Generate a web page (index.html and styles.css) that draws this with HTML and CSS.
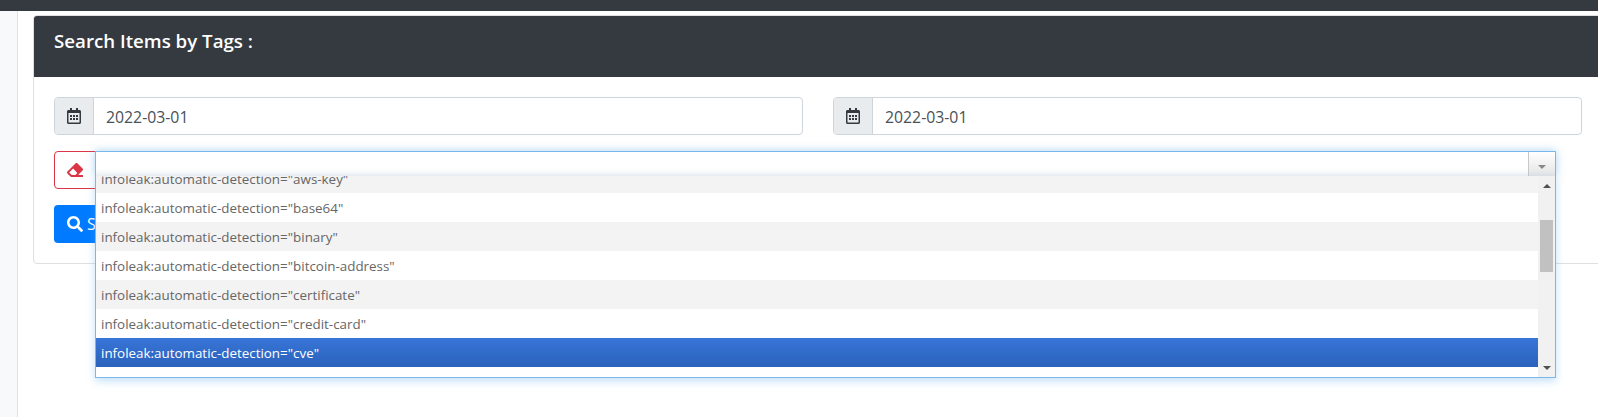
FILE: index.html
```html
<!DOCTYPE html>
<html lang="en">
<head>
    <meta charset="UTF-8">
    <meta name="viewport" content="width=device-width, initial-scale=1.0">
    <title>Search Items by Tags</title>
    <link rel="stylesheet" href="styles.css">
</head>
<body>

    <!-- Top Bar -->
    <div class="topbar"></div>

    <div class="page">
        <div class="sidebar"></div>

        <div class="main">
            <div class="card">
                <div class="card-header">
                    <h5>Search Items by Tags :</h5>
                </div>

                <div class="card-body">

                    <!-- Dates -->
                    <div class="date-row">
                        <div class="input-group">
                            <span class="input-icon">
                                <svg class="icon-calendar" viewBox="0 0 448 512"><path d="M148 288h-40c-6.6 0-12-5.4-12-12v-40c0-6.6 5.4-12 12-12h40c6.6 0 12 5.4 12 12v40c0 6.6-5.4 12-12 12zm108-12v-40c0-6.6-5.4-12-12-12h-40c-6.6 0-12 5.4-12 12v40c0 6.6 5.4 12 12 12h40c6.6 0 12-5.4 12-12zm96 0v-40c0-6.6-5.4-12-12-12h-40c-6.6 0-12 5.4-12 12v40c0 6.6 5.4 12 12 12h40c6.6 0 12-5.4 12-12zm-96 96v-40c0-6.6-5.4-12-12-12h-40c-6.6 0-12 5.4-12 12v40c0 6.6 5.4 12 12 12h40c6.6 0 12-5.4 12-12zm-96 0v-40c0-6.6-5.4-12-12-12h-40c-6.6 0-12 5.4-12 12v40c0 6.6 5.4 12 12 12h40c6.6 0 12-5.4 12-12zm192 0v-40c0-6.6-5.4-12-12-12h-40c-6.6 0-12 5.4-12 12v40c0 6.6 5.4 12 12 12h40c6.6 0 12-5.4 12-12zm96-260v352c0 26.5-21.5 48-48 48H48c-26.5 0-48-21.5-48-48V112c0-26.5 21.5-48 48-48h48V12c0-6.6 5.4-12 12-12h40c6.6 0 12 5.4 12 12v52h128V12c0-6.6 5.4-12 12-12h40c6.6 0 12 5.4 12 12v52h48c26.5 0 48 21.5 48 48zm-48 346V160H48v298c0 3.3 2.7 6 6 6h340c3.3 0 6-2.7 6-6z"/></svg>
                            </span>
                            <span class="input-value">2022-03-01</span>
                        </div>
                        <div class="input-group">
                            <span class="input-icon">
                                <svg class="icon-calendar" viewBox="0 0 448 512"><path d="M148 288h-40c-6.6 0-12-5.4-12-12v-40c0-6.6 5.4-12 12-12h40c6.6 0 12 5.4 12 12v40c0 6.6-5.4 12-12 12zm108-12v-40c0-6.6-5.4-12-12-12h-40c-6.6 0-12 5.4-12 12v40c0 6.6 5.4 12 12 12h40c6.6 0 12-5.4 12-12zm96 0v-40c0-6.6-5.4-12-12-12h-40c-6.6 0-12 5.4-12 12v40c0 6.6 5.4 12 12 12h40c6.6 0 12-5.4 12-12zm-96 96v-40c0-6.6-5.4-12-12-12h-40c-6.6 0-12 5.4-12 12v40c0 6.6 5.4 12 12 12h40c6.6 0 12-5.4 12-12zm-96 0v-40c0-6.6-5.4-12-12-12h-40c-6.6 0-12 5.4-12 12v40c0 6.6 5.4 12 12 12h40c6.6 0 12-5.4 12-12zm192 0v-40c0-6.6-5.4-12-12-12h-40c-6.6 0-12 5.4-12 12v40c0 6.6 5.4 12 12 12h40c6.6 0 12-5.4 12-12zm96-260v352c0 26.5-21.5 48-48 48H48c-26.5 0-48-21.5-48-48V112c0-26.5 21.5-48 48-48h48V12c0-6.6 5.4-12 12-12h40c6.6 0 12 5.4 12 12v52h128V12c0-6.6 5.4-12 12-12h40c6.6 0 12 5.4 12 12v52h48c26.5 0 48 21.5 48 48zm-48 346V160H48v298c0 3.3 2.7 6 6 6h340c3.3 0 6-2.7 6-6z"/></svg>
                            </span>
                            <span class="input-value">2022-03-01</span>
                        </div>
                    </div>

                    <!-- Tag select -->
                    <div class="tag-row">
                        <button class="btn-erase">
                            <svg class="icon-eraser" viewBox="0 0 512 512"><path d="M497.941 273.941c18.745-18.745 18.745-49.137 0-67.882l-160-160c-18.745-18.745-49.136-18.746-67.883 0l-256 256c-18.745 18.745-18.745 49.137 0 67.882l96 96A48.004 48.004 0 0 0 144 480h356c6.627 0 12-5.373 12-12v-40c0-6.627-5.373-12-12-12H355.883l142.058-142.059zm-302.627-62.627l137.373 137.373L265.373 416H150.628l-80-80 124.686-124.686z"/></svg>
                        </button>

                        <div class="tag-select">
                            <div class="select-arrow"><span class="caret"></span></div>

                            <div class="select-drop">
                                <ul class="select-list">
                                    <li class="odd">infoleak:automatic-detection="aws-key"</li>
                                    <li>infoleak:automatic-detection="base64"</li>
                                    <li class="odd">infoleak:automatic-detection="binary"</li>
                                    <li>infoleak:automatic-detection="bitcoin-address"</li>
                                    <li class="odd">infoleak:automatic-detection="certificate"</li>
                                    <li>infoleak:automatic-detection="credit-card"</li>
                                    <li class="active">infoleak:automatic-detection="cve"</li>
                                </ul>
                                <div class="scrollbar">
                                    <span class="scroll-up"></span>
                                    <span class="scroll-thumb"></span>
                                    <span class="scroll-down"></span>
                                </div>
                            </div>
                        </div>
                    </div>

                    <button class="btn-search">
                        <svg class="icon-search" viewBox="0 0 512 512"><path d="M505 442.7L405.3 343c-4.5-4.5-10.6-7-17-7H372c27.6-35.3 44-79.7 44-128C416 93.1 322.9 0 208 0S0 93.1 0 208s93.1 208 208 208c48.3 0 92.7-16.4 128-44v16.3c0 6.4 2.5 12.5 7 17l99.7 99.7c9.4 9.4 24.6 9.4 33.9 0l28.3-28.3c9.4-9.4 9.4-24.6.1-34zM208 336c-70.7 0-128-57.2-128-128 0-70.7 57.2-128 128-128 70.7 0 128 57.2 128 128 0 70.7-57.2 128-128 128z"/></svg>
                        Search Tags
                    </button>

                </div>
            </div>
        </div>
    </div>

</body>
</html>
```

FILE: styles.css
```css
* {
    margin: 0;
    padding: 0;
    box-sizing: border-box;
}

html, body {
    height: 100%;
    overflow: hidden;
}

body {
    font-family: 'Open Sans', 'Noto Sans', sans-serif;
    background-color: #ffffff;
    color: #495057;
}

.topbar {
    height: 11px;
    background-color: #343a40;
}

.page {
    display: flex;
    height: 406px;
}

.sidebar {
    flex: 0 0 18px;
    background-color: #f8f9fa;
    border-right: 1px solid #dee2e6;
}

.main {
    flex: 1;
    min-width: 0;
    overflow: hidden;
    padding: 4px 0 0 15px;
}

/* Card runs off the right edge of the window */
.card {
    width: 1620px;
    border: 1px solid #dfdfdf;
    border-radius: 4px;
}

.card-header {
    height: 61px;
    padding: 12px 20px 0;
    background-color: #343a40;
    border-radius: 3px 3px 0 0;
}

.card-header h5 {
    font-size: 18.7px;
    line-height: 26px;
    font-weight: 600;
    color: #ffffff;
}

.card-body {
    padding: 20px;
}

/* Date inputs */
.date-row {
    display: grid;
    grid-template-columns: 749px 749px;
    column-gap: 30px;
    margin-bottom: 16px;
}

.input-group {
    display: flex;
    height: 38px;
    border: 1px solid #ced4da;
    border-radius: 4px;
    overflow: hidden;
}

.input-icon {
    flex: 0 0 39px;
    display: flex;
    align-items: center;
    justify-content: center;
    background-color: #e9ecef;
    border-right: 1px solid #ced4da;
}

.icon-calendar {
    width: 14px;
    height: 16px;
    fill: #343a40;
}

.input-value {
    padding: 1px 0 0 12px;
    font-size: 15.8px;
    line-height: 36px;
}

/* Tag select */
.tag-row {
    display: flex;
    height: 38px;
    margin-bottom: 16px;
}

.btn-erase {
    flex: 0 0 42px;
    display: flex;
    align-items: center;
    justify-content: center;
    background-color: #ffffff;
    border: 1px solid #dc3545;
    border-radius: 4px 0 0 4px;
}

.icon-eraser {
    width: 16px;
    height: 16px;
    fill: #dc3545;
}

.tag-select {
    position: relative;
    z-index: 2;
    width: 1461px;
    height: 25px;
    margin-left: -1px;
    background: linear-gradient(#ffffff 70%, #f3f3f3);
    border: 1px solid #7ab8ec;
    border-bottom: 0;
    box-shadow: 0 0 8px rgba(82, 168, 236, 0.5);
}

.select-arrow {
    position: absolute;
    top: 0;
    right: 0;
    width: 27px;
    height: 24px;
    display: flex;
    align-items: center;
    justify-content: center;
    padding-top: 5px;
    background: linear-gradient(#ffffff, #e4e4e4);
    border-left: 1px solid #c8c8c8;
}

.caret {
    border-top: 4px solid #888888;
    border-left: 4px solid transparent;
    border-right: 4px solid transparent;
}

.select-drop {
    position: absolute;
    top: 24px;
    left: -1px;
    right: -1px;
    height: 202px;
    display: flex;
    overflow: hidden;
    background-color: #ffffff;
    border: 1px solid #7ab8ec;
    border-top: 0;
    box-shadow: 0 3px 8px rgba(82, 168, 236, 0.35);
}

.select-list {
    flex: 1;
    min-width: 0;
    margin-top: -12px;
    list-style: none;
}

.select-list li {
    height: 29px;
    padding: 1px 0 0 5px;
    font-size: 13.4px;
    line-height: 29px;
    color: #666666;
}

.select-list .odd {
    background-color: #f3f3f3;
}

.select-list .active {
    color: #ffffff;
    background: linear-gradient(#3875d7, #2a62bc);
}

/* Scrollbar of the list */
.scrollbar {
    position: relative;
    flex: 0 0 17px;
    background-color: #f1f1f1;
}

.scroll-up, .scroll-down {
    position: absolute;
    left: 5px;
    border-left: 4px solid transparent;
    border-right: 4px solid transparent;
}

.scroll-up {
    top: 8px;
    border-bottom: 4px solid #505050;
}

.scroll-down {
    bottom: 7px;
    border-top: 4px solid #505050;
}

.scroll-thumb {
    position: absolute;
    top: 44px;
    left: 2px;
    width: 13px;
    height: 52px;
    background-color: #c1c1c1;
}

/* Search button */
.btn-search {
    display: flex;
    align-items: center;
    gap: 4px;
    height: 38px;
    padding: 0 13px;
    font-family: inherit;
    font-size: 16px;
    color: #ffffff;
    background-color: #007bff;
    border: 0;
    border-radius: 4px;
}

.icon-search {
    width: 16px;
    height: 16px;
    fill: #ffffff;
}
```
